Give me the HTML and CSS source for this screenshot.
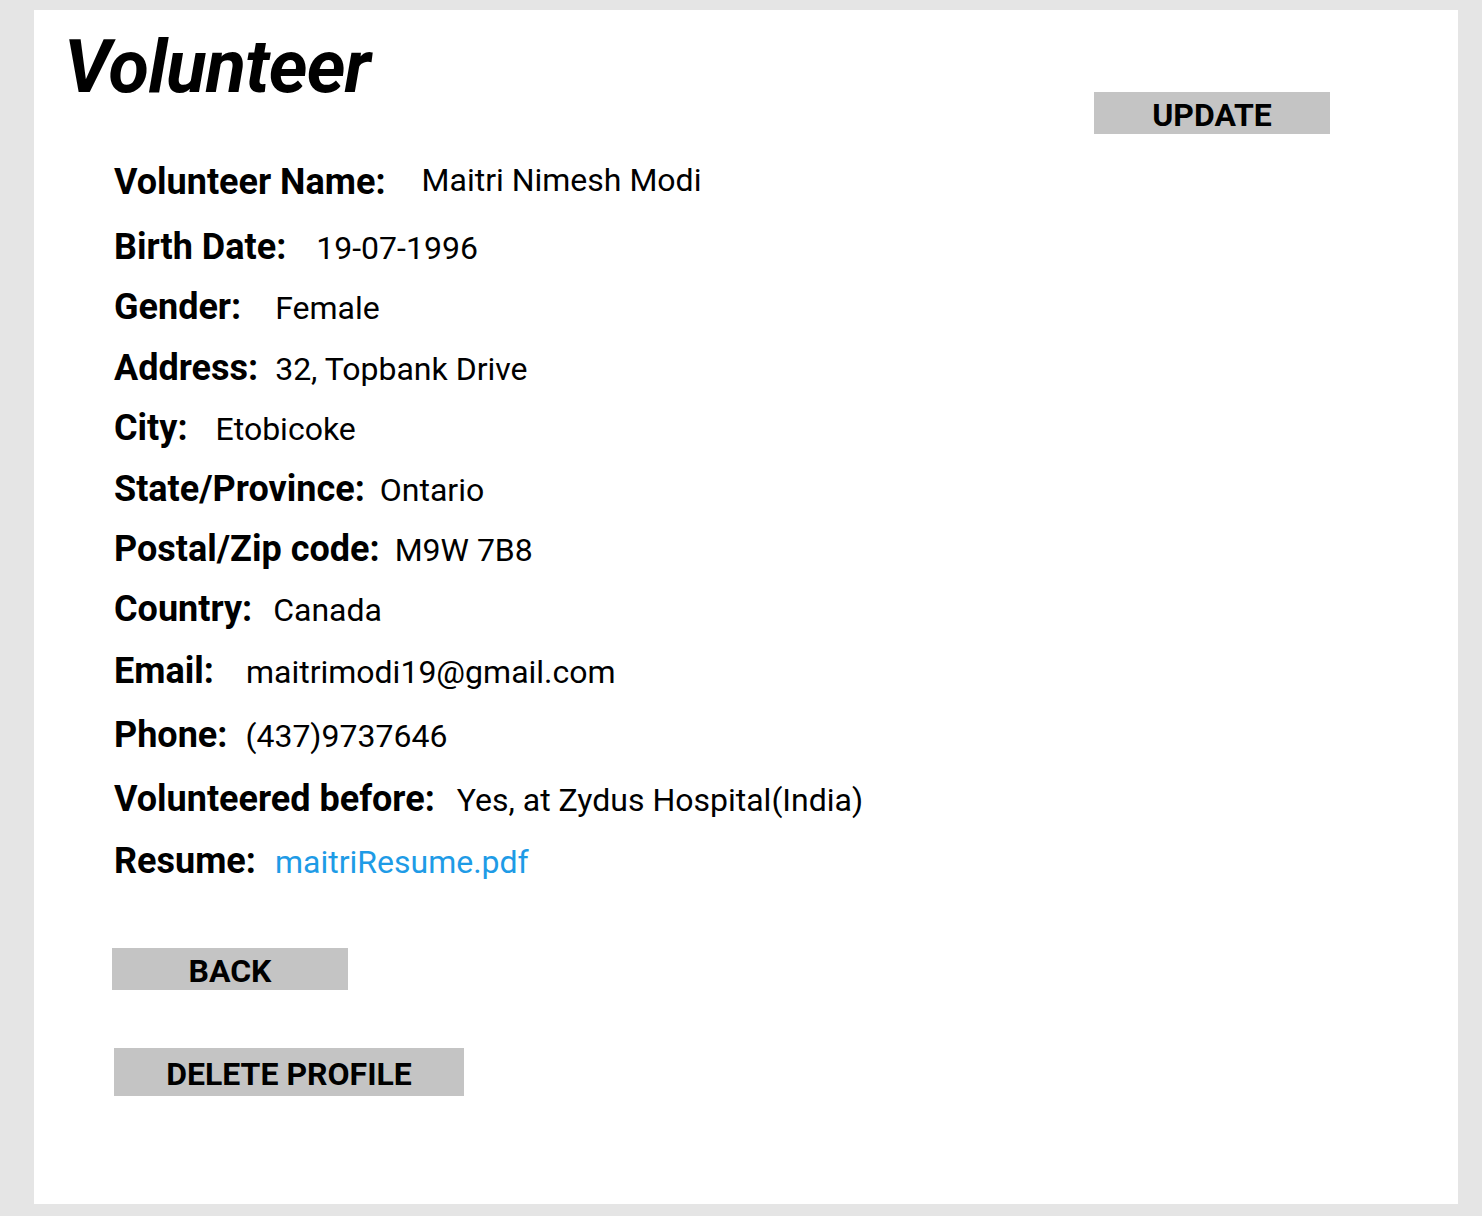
FILE: index.html
```html
<!DOCTYPE html>
<html>
<head>
<meta charset="utf-8">
<link rel="stylesheet" href="styles.css">
</head>
<body>
<div class="card">
  <div class="header">
    <h1 class="title">Volunteer</h1>
    <button class="btn btn-update">UPDATE</button>
  </div>
  <div class="details">
    <div class="row r-name"><span class="label">Volunteer Name:</span><span class="value">Maitri Nimesh Modi</span></div>
    <div class="row r-birth"><span class="label">Birth Date:</span><span class="value">19-07-1996</span></div>
    <div class="row r-gender"><span class="label">Gender:</span><span class="value">Female</span></div>
    <div class="row r-address"><span class="label">Address:</span><span class="value">32, Topbank Drive</span></div>
    <div class="row r-city"><span class="label">City:</span><span class="value">Etobicoke</span></div>
    <div class="row r-state"><span class="label">State/Province:</span><span class="value">Ontario</span></div>
    <div class="row r-postal"><span class="label">Postal/Zip code:</span><span class="value">M9W 7B8</span></div>
    <div class="row r-country"><span class="label">Country:</span><span class="value">Canada</span></div>
    <div class="row r-email"><span class="label">Email:</span><span class="value">maitrimodi19@gmail.com</span></div>
    <div class="row r-phone"><span class="label">Phone:</span><span class="value">(437)9737646</span></div>
    <div class="row r-before"><span class="label">Volunteered before:</span><span class="value">Yes, at Zydus Hospital(India)</span></div>
    <div class="row r-resume"><span class="label">Resume:</span><a class="value link" href="#">maitriResume.pdf</a></div>
  </div>
  <div class="actions">
    <button class="btn btn-back">BACK</button>
    <button class="btn btn-delete">DELETE PROFILE</button>
  </div>
</div>
</body>
</html>
```
FILE: styles.css
```css
html, body {
  margin: 0;
  padding: 0;
  background: #e5e5e5;
  font-family: Roboto, "Liberation Sans", sans-serif;
  color: #000;
}
body {
  padding: 10px 24px 12px 34px;
}
.card {
  background: #fff;
  width: 1424px;
  height: 1194px;
  box-sizing: border-box;
  padding: 0 0 0 30px;
}
.header {
  display: flex;
  align-items: flex-start;
}
.title {
  margin: 0;
  font-size: 74px;
  font-style: italic;
  font-weight: 700;
  line-height: 114px;
  letter-spacing: -0.8px;
  width: 1030px;
  flex-shrink: 0;
}
.btn {
  background: #c4c4c4;
  border: none;
  padding: 0;
  font-family: Roboto, "Liberation Sans", sans-serif;
  font-weight: 700;
  font-size: 32px;
  color: #000;
  display: flex;
  align-items: center;
  justify-content: center;
}
.btn-update {
  margin-top: 82px;
  width: 236px;
  height: 42px;
  padding-top: 4px;
  flex-shrink: 0;
}
.details {
  padding-left: 50px;
  margin-top: 18px;
}
.row {
  display: flex;
  align-items: baseline;
  height: 60px;
  line-height: 60px;
}
.label {
  font-weight: 700;
  font-size: 36px;
}
.value {
  font-size: 32px;
}
.link {
  color: #1e9be6;
  text-decoration: none;
}
.r-name { height: 65px; }
.r-name .value { margin-left: 36px; position: relative; top: -3px; }
.r-birth .value { margin-left: 30px; }
.r-gender { height: 61px; }
.r-gender .value { margin-left: 34px; }
.r-address .value { margin-left: 17px; }
.r-city { height: 61px; }
.r-city .value { margin-left: 28px; }
.r-state .value { margin-left: 15px; }
.r-postal .value { margin-left: 15px; }
.r-country { height: 62px; }
.r-country .value { margin-left: 21px; }
.r-email { height: 64px; }
.r-email .value { margin-left: 32px; }
.r-phone { height: 64px; }
.r-phone .value { margin-left: 18px; }
.r-before { height: 62px; }
.r-before .value { margin-left: 22px; }
.r-resume { height: 62px; }
.r-resume .value { margin-left: 19px; }
.actions {
  display: flex;
  flex-direction: column;
  align-items: flex-start;
}
.btn-back {
  margin-top: 55px;
  margin-left: 48px;
  width: 236px;
  height: 42px;
  padding-top: 4px;
}
.btn-delete {
  margin-top: 58px;
  margin-left: 50px;
  width: 350px;
  height: 48px;
  padding-top: 4px;
}
```
